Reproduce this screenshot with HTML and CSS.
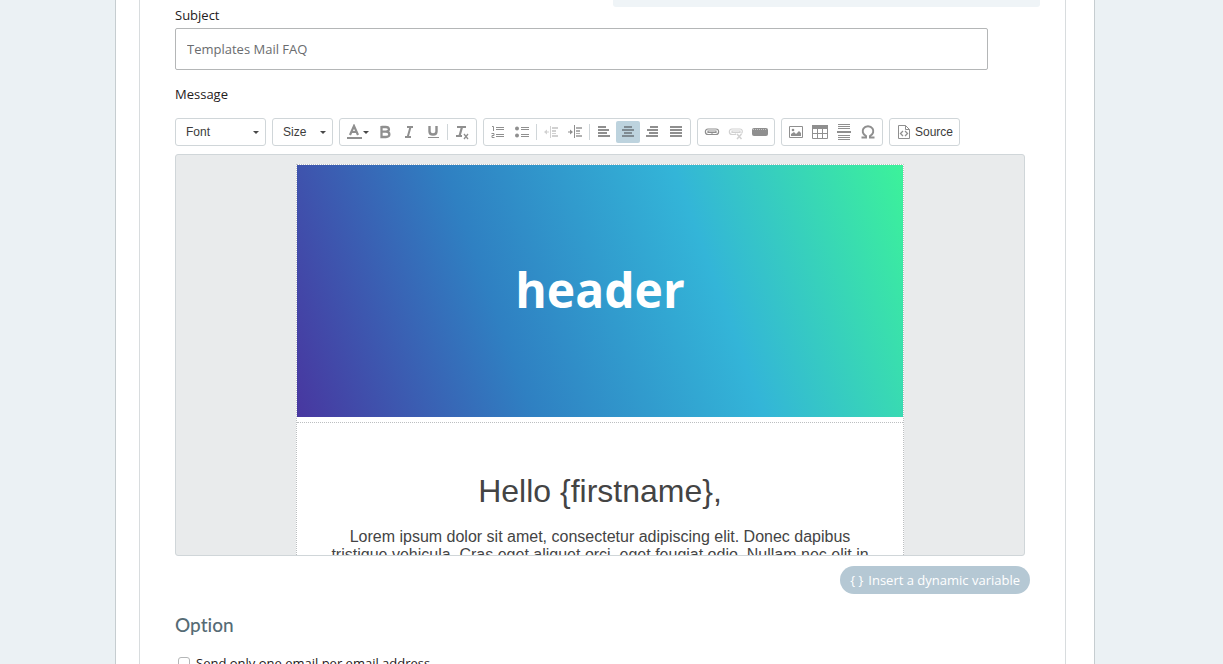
FILE: index.html
```html
<!DOCTYPE html>
<html lang="en">
<head>
    <meta charset="UTF-8">
    <meta name="viewport" content="width=device-width, initial-scale=1.0">
    <title>Email template</title>
    <link rel="stylesheet" href="styles.css">
</head>
<body>

    <main class="page">
        <form class="form-container">
            <div class="hint"></div>

            <label class="field-label" for="subject">Subject</label>
            <input class="subject-input" type="text" id="subject" value="Templates Mail FAQ">

            <div class="field-label message-label" id="messageLabel">Message</div>

            <div class="toolbar" role="toolbar" aria-label="Formatting">
                <div class="select-box font-box">
                    <select aria-label="Font"><option>Font</option></select>
                </div>
                <div class="select-box size-box">
                    <select aria-label="Size"><option>Size</option></select>
                </div>

                <!-- Text style -->
                <div class="group">
                    <button type="button" class="tool color-tool" title="Text color">
                        <svg width="16" height="16" viewBox="0 0 16 16"><path d="M4 11L8 2L12 11M5.500 8H10.500" fill="none" stroke="currentColor" stroke-width="2.200"/><path d="M1 13h15v2H1z"/></svg>
                        <span class="caret"></span>
                    </button>
                    <button type="button" class="tool" title="Bold">
                        <svg width="16" height="16" viewBox="0 0 16 16"><path d="M4.500 3H8.500C13 3 13 7.500 9 7.700H4.500M9 7.700C13.500 7.700 13.500 13 9 13H4.500V2" fill="none" stroke="currentColor" stroke-width="2.300"/></svg>
                    </button>
                    <button type="button" class="tool" title="Italic">
                        <svg width="16" height="16" viewBox="0 0 16 16"><path d="M6 3H12M4 13H10M9.500 3L6.700 13" fill="none" stroke="currentColor" stroke-width="2"/></svg>
                    </button>
                    <button type="button" class="tool" title="Underline">
                        <svg width="16" height="16" viewBox="0 0 16 16"><path d="M4.500 2V7.500C4.500 11.500 11.500 11.500 11.500 7.500V2" fill="none" stroke="currentColor" stroke-width="2.400"/><path d="M3 13h11v1H3z"/></svg>
                    </button>
                    <span class="separator"></span>
                    <button type="button" class="tool" title="Remove format">
                        <svg width="16" height="16" viewBox="0 0 16 16"><path d="M3 3H12M2 12H8M8 3L5.500 12" fill="none" stroke="currentColor" stroke-width="2.200"/><path d="M10 10L14 15M14 10L10 15" fill="none" stroke="currentColor" stroke-width="1.300"/></svg>
                    </button>
                </div>

                <!-- Lists, indent and alignment -->
                <div class="group">
                    <button type="button" class="tool" title="Numbered list">
                        <svg width="16" height="16" viewBox="0 0 16 16"><path d="M2 2.500H3.500V7M1.500 9.500H4V11.500H2V13.500H4.500" fill="none" stroke="currentColor"/><path d="M6 3h8v1H6zM6 5h8v1H6zM6 10h8v1H6zM6 12h8v1H6z"/></svg>
                    </button>
                    <button type="button" class="tool" title="Bulleted list">
                        <svg width="16" height="16" viewBox="0 0 16 16"><circle cx="3" cy="4.500" r="2"/><circle cx="3" cy="11.500" r="2"/><path d="M7 3h8v1H7zM7 5h8v1H7zM7 10h8v1H7zM7 12h8v1H7z"/></svg>
                    </button>
                    <span class="separator"></span>
                    <button type="button" class="tool" title="Decrease indent" disabled>
                        <svg width="16" height="16" viewBox="0 0 16 16"><path d="M7 2h1v12H7zM9 3h6v2H9zM9 6h4v2H9zM9 9h4v1H9zM9 11h6v2H9zM3 7.500h3v1H3zM4 5.500v5L1 8z"/></svg>
                    </button>
                    <button type="button" class="tool" title="Increase indent">
                        <svg width="16" height="16" viewBox="0 0 16 16"><path d="M7 1h1v13H7zM1 7.500h2v1H1zM3 5.500v5l3-2.500z"/><path d="M9 3h6v2H9zM9 6h4v2H9zM9 9h4v1H9zM9 11h6v2H9z" opacity=".7"/></svg>
                    </button>
                    <span class="separator"></span>
                    <button type="button" class="tool" title="Align left">
                        <svg width="16" height="16" viewBox="0 0 16 16"><path d="M2 2h8v2H2zM2 5h11v2H2zM2 8h9v2H2zM2 11h12v2H2z"/></svg>
                    </button>
                    <button type="button" class="tool active" title="Center">
                        <svg width="16" height="16" viewBox="0 0 16 16"><path d="M4 2h8v2H4zM2 5h12v2H2zM4 8h8v2H4zM2 11h12v2H2z"/></svg>
                    </button>
                    <button type="button" class="tool" title="Align right">
                        <svg width="16" height="16" viewBox="0 0 16 16"><path d="M6 2h8v2H6zM3 5h11v2H3zM5 8h9v2H5zM2 11h12v2H2z"/></svg>
                    </button>
                    <button type="button" class="tool" title="Justify">
                        <svg width="16" height="16" viewBox="0 0 16 16"><path d="M2 2h12v2H2zM2 5h12v2H2zM2 8h12v2H2zM2 11h12v2H2z"/></svg>
                    </button>
                </div>

                <!-- Links -->
                <div class="group">
                    <button type="button" class="tool" title="Link">
                        <svg width="16" height="16" viewBox="0 0 16 16" fill="none" stroke="currentColor" stroke-width="1.200"><path d="M7.500 5.500V5H4C.500 5 .500 10.500 4 10.500H7.500V9.500M8.500 5.500V5H12C15.500 5 15.500 10.500 12 10.500H8.500V9.500M4 7H12V8.500H4z"/></svg>
                    </button>
                    <button type="button" class="tool" title="Unlink" disabled>
                        <svg width="16" height="16" viewBox="0 0 16 16" fill="none" stroke="currentColor" stroke-width="1.200"><path d="M7.500 5.500V5H4C.500 5 .500 10.500 4 10.500H7.500V9.500M8.500 5.500V5H12C14.500 5 15 8 13.500 9.500M4 7H12V8.500H4z"/><path d="M9 10L13.500 15M13.500 10L9 15" stroke-width="1.500"/></svg>
                    </button>
                    <button type="button" class="tool" title="Button">
                        <svg width="16" height="16" viewBox="0 0 16 16"><rect x="0" y="4" width="16" height="8" rx="2"/><path d="M1 5.500h14" stroke="#c4c4c4" stroke-dasharray="1 1"/></svg>
                    </button>
                </div>

                <!-- Inserts -->
                <div class="group">
                    <button type="button" class="tool" title="Image">
                        <svg width="16" height="16" viewBox="0 0 16 16"><path d="M1.500 2.500h13v11h-13z" fill="none" stroke="currentColor"/><path d="M3 12V10l3-2 2 2 3-3 2 2v3z"/><circle cx="5" cy="6" r="1.300"/></svg>
                    </button>
                    <button type="button" class="tool" title="Table">
                        <svg width="16" height="16" viewBox="0 0 16 16"><path d="M0 1h16v4H0z"/><path d="M.500 4v10.500h15V4M.500 9.500h15M5.500 5v9M10.500 5v9" fill="none" stroke="currentColor"/></svg>
                    </button>
                    <button type="button" class="tool" title="Horizontal line">
                        <svg width="16" height="16" viewBox="0 0 16 16"><path d="M2 0h12v1H2zM2 2h12v1H2zM2 4h12v1H2zM1 7h14v2H1zM2 11h12v1H2zM2 13h12v1H2zM2 15h12v1H2z"/></svg>
                    </button>
                    <button type="button" class="tool" title="Special character">
                        <svg width="16" height="16" viewBox="0 0 16 16"><path d="M1.500 13.500H6V12C2.500 10 2 7 3.500 4.500C5.500 1.500 10.500 1.500 12.500 4.500C14 7 13.500 10 10 12V13.500H14.500" fill="none" stroke="currentColor" stroke-width="2"/></svg>
                    </button>
                </div>

                <div class="group">
                    <button type="button" class="tool source-tool" title="Source">
                        <svg width="16" height="16" viewBox="0 0 16 16" fill="none" stroke="#8f8f8f"><path d="M2.500 1.500h7l4 4v9h-11zM9.500 1.500v4h4"/><path d="M7 7L4.500 9.500L7 12M9 7L11.500 9.500L9 12" stroke-width="1.300"/></svg>
                        Source
                    </button>
                </div>
            </div>

            <div class="editor" role="textbox" aria-multiline="true" aria-labelledby="messageLabel" contenteditable="true" spellcheck="false">
                <div class="mail">
                    <div class="mail-header">
                        <div class="banner">header</div>
                    </div>
                    <div class="mail-body">
                        <h1>Hello {firstname},</h1>
                        <p>Lorem ipsum dolor sit amet, consectetur adipiscing elit. Donec dapibus tristique vehicula. Cras eget aliquet orci, eget feugiat odio. Nullam nec elit in</p>
                    </div>
                </div>
            </div>

            <button type="button" class="variable-btn"><span>{ }</span>Insert a dynamic variable</button>

            <h2>Option</h2>
            <label class="option">
                <input type="checkbox">
                Send only one email per email address
            </label>
        </form>
    </main>

</body>
</html>
```
FILE: styles.css
```css
* {
    box-sizing: border-box;
}

html {
    overflow: hidden;
}

body {
    font-family: "Open Sans", sans-serif;
    font-size: 13px;
    background-color: #ebf1f4;
    margin: 0;
    padding: 0 128px 0 115px;
    color: #1f2021;
}

.page {
    background-color: #ffffff;
    border: 1px solid #c6cdd0;
    border-width: 0 1px;
    min-height: 100vh;
    padding: 0 28px 0 23px;
}

.form-container {
    border: 1px solid #d8dcde;
    border-width: 0 1px;
    min-height: 100vh;
    padding: 0 25px 0 35px;
    display: flex;
    flex-direction: column;
}

.hint {
    background-color: #eff4f7;
    border-radius: 0 0 3px 3px;
    height: 7px;
    margin-left: 438px;
}

.field-label {
    line-height: 16px;
}

.subject-input {
    height: 42px;
    margin: 5px 52px 0 0;
    padding: 0 11px;
    border: 1px solid #b4b6b7;
    border-radius: 2px;
    font: inherit;
    color: #6a6c6e;
}

.message-label {
    margin-top: 16px;
}

.toolbar {
    display: flex;
    flex-wrap: wrap;
    gap: 6px;
    margin-top: 16px;
    font-family: "Liberation Sans", Arial, sans-serif;
}

.group,
.select-box {
    display: flex;
    align-items: center;
    height: 28px;
    border: 1px solid #d0d6d9;
    border-radius: 3px;
    padding: 0 2px;
}

.select-box {
    position: relative;
    padding: 0;
}

.font-box {
    width: 91px;
}

.size-box {
    width: 61px;
}

.select-box select {
    appearance: none;
    width: 100%;
    height: 100%;
    padding: 0 10px;
    border: none;
    background: none;
    font-family: inherit;
    font-size: 12px;
    color: #3c3c3c;
}

.select-box::after,
.caret {
    content: "";
    border: 3px solid transparent;
    border-top-color: #484848;
    border-bottom: none;
}

.select-box::after {
    position: absolute;
    right: 6px;
    top: 12px;
    pointer-events: none;
}

.tool {
    display: flex;
    align-items: center;
    justify-content: center;
    width: 24px;
    height: 22px;
    padding: 0;
    border: none;
    background: none;
    color: #8f8f8f;
    cursor: pointer;
}

.tool svg {
    flex: none;
    fill: currentColor;
}

.tool svg[fill="none"] {
    fill: none;
}

.tool:disabled {
    opacity: 0.4;
}

.active {
    background-color: #bdd3de;
    border-radius: 2px;
    color: #7f8b92;
}

.color-tool {
    width: 31px;
    gap: 1px;
}

.source-tool {
    width: 65px;
    gap: 3px;
    font-family: inherit;
    font-size: 12px;
    color: #3c3c3c;
}

.separator {
    width: 1px;
    height: 16px;
    margin: 0 2px;
    background-color: #d0d6d9;
}

.editor {
    height: 402px;
    margin: 8px 15px 0 0;
    padding: 9px 20px 0;
    overflow: hidden;
    border: 1px solid #d0d6d9;
    border-radius: 3px;
    background-color: #e9ebec;
    font-family: "Liberation Sans", Arial, sans-serif;
    color: #444444;
    text-align: center;
}

.mail {
    max-width: 608px;
    margin: 0 auto;
    background-color: #ffffff;
    border: 1px dotted #bcbfc1;
}

.mail-header {
    padding-bottom: 5px;
    border-bottom: 1px dotted #bcbfc1;
}

.banner {
    display: flex;
    align-items: center;
    justify-content: center;
    height: 252px;
    padding-bottom: 4px;
    background: linear-gradient(70deg, #4837a0 0%, #2f80c2 34%, #33b5d8 67%, #3cf29a 100%);
    font-family: "Open Sans", sans-serif;
    font-size: 48px;
    font-weight: 700;
    color: #ffffff;
}

.mail-body {
    padding: 48px 30px;
}

.mail-body h1 {
    margin: 0;
    font-size: 32px;
    font-weight: 400;
    line-height: 40px;
}

.mail-body p {
    margin: 17px 0 0;
    font-size: 16px;
    line-height: 18px;
}

.variable-btn {
    align-self: flex-end;
    display: flex;
    align-items: center;
    gap: 5px;
    height: 28px;
    margin: 10px 10px 0 0;
    padding: 0 10px;
    border: none;
    border-radius: 14px;
    background-color: #b5c8d4;
    color: #ffffff;
    font: inherit;
    font-weight: 500;
    cursor: pointer;
}

h2 {
    margin: 20px 0 0;
    font-family: Lato, sans-serif;
    font-size: 19px;
    font-weight: 500;
    font-variant-ligatures: none;
    line-height: 22px;
    color: #566b75;
}

.option {
    display: flex;
    align-items: center;
    gap: 6px;
    margin-top: 18px;
    line-height: 18px;
}

.option input {
    appearance: none;
    width: 12px;
    height: 12px;
    margin: 0 0 0 3px;
    border: 1px solid #b4b6b7;
    border-radius: 3px;
}
```
